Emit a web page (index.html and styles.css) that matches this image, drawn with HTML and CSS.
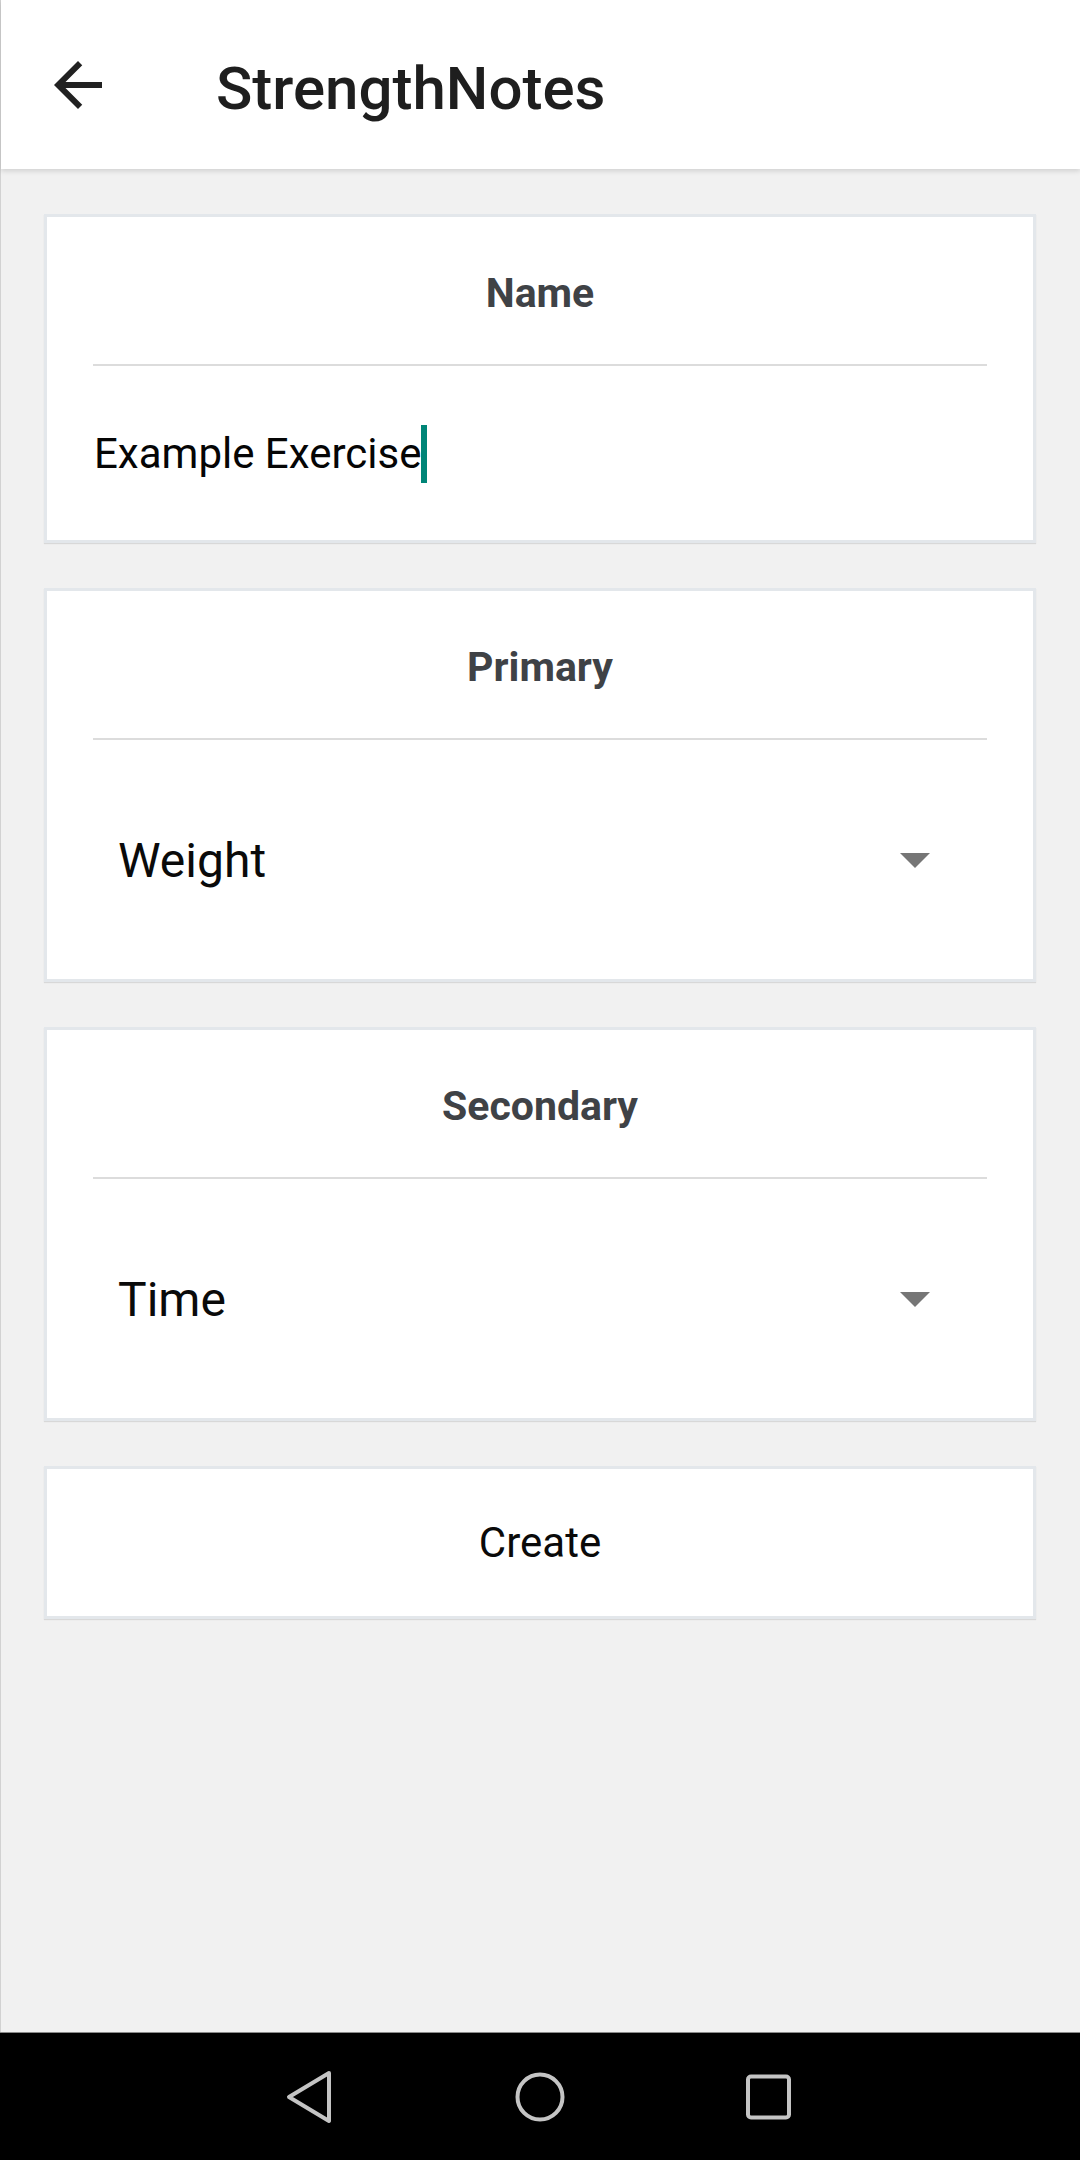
FILE: index.html
```html
<!DOCTYPE html>
<html lang="en">
<head>
<meta charset="utf-8">
<title>StrengthNotes</title>
<link rel="stylesheet" href="styles.css">
</head>
<body>
<div class="screen">
  <header class="appbar">
    <button class="nav-btn" aria-label="Back">
      <svg viewBox="0 0 24 24" width="72" height="72"><path d="M20 11H7.83l5.59-5.59L12 4l-8 8 8 8 1.41-1.41L7.83 13H20v-2z" fill="#212121"/></svg>
    </button>
    <h1 class="title">StrengthNotes</h1>
  </header>

  <main class="content">
    <section class="card">
      <div class="card-label">Name</div>
      <div class="divider"></div>
      <div class="field"><span class="field-text">Example Exercise</span><span class="cursor"></span></div>
    </section>

    <section class="card">
      <div class="card-label">Primary</div>
      <div class="divider"></div>
      <div class="spinner"><span class="spinner-text">Weight</span><span class="caret"></span></div>
    </section>

    <section class="card">
      <div class="card-label">Secondary</div>
      <div class="divider"></div>
      <div class="spinner"><span class="spinner-text">Time</span><span class="caret"></span></div>
    </section>

    <section class="card card-button">
      <span class="button-text">Create</span>
    </section>
  </main>

  <nav class="sysnav">
    <svg class="sys-icon" viewBox="0 0 60 60" width="60" height="60"><path d="M48 6 L 8 30 L 48 54 Z" fill="none" stroke="#c4c4c4" stroke-width="4" stroke-linejoin="round"/></svg>
    <svg class="sys-icon" viewBox="0 0 60 60" width="60" height="60"><circle cx="30" cy="30" r="22.5" fill="none" stroke="#c4c4c4" stroke-width="4"/></svg>
    <svg class="sys-icon" viewBox="0 0 60 60" width="60" height="60"><rect x="9" y="9.5" width="41" height="41" rx="3" fill="none" stroke="#c4c4c4" stroke-width="4"/></svg>
  </nav>
</div>
</body>
</html>
```

FILE: styles.css
```css
* { box-sizing: border-box; }

html, body {
  margin: 0;
  padding: 0;
}

body {
  width: 1080px;
  height: 2160px;
  font-family: Roboto, "Noto Sans", "Liberation Sans", sans-serif;
  background: #f1f1f1;
  overflow: hidden;
}

.screen {
  width: 1080px;
  height: 2160px;
  display: flex;
  flex-direction: column;
  border-left: 1px solid #d2d2d2;
}

.appbar {
  height: 169px;
  flex: 0 0 169px;
  background: #ffffff;
  display: flex;
  align-items: center;
  padding-left: 41px;
  box-shadow: 0 2px 5px rgba(0, 0, 0, 0.14);
  position: relative;
  z-index: 1;
}

.nav-btn {
  width: 72px;
  height: 72px;
  padding: 0;
  border: 0;
  background: transparent;
  display: flex;
}

.title {
  margin: 0 0 0 102px;
  padding-top: 8px;
  font-size: 60px;
  line-height: 72px;
  font-weight: 500;
  color: #1e1e1e;
}

.content {
  flex: 1;
  padding: 45px 44px 0 43px;
  display: flex;
  flex-direction: column;
  gap: 45px;
}

.card {
  background: #ffffff;
  border: 3px solid #e3e7eb;
  box-shadow: 0 1px 1px rgba(0, 0, 0, 0.10);
  padding: 52px 0 0 0;
}

.card-label {
  font-size: 41px;
  line-height: 48px;
  font-weight: 700;
  color: #3f4246;
  text-align: center;
}

.divider {
  height: 2px;
  margin: 47px 46px 0 46px;
  background: #dcdcdc;
}

.field {
  margin: 58.6px 0 57.4px 47px;
  height: 58px;
  display: flex;
  align-items: center;
}

.field-text {
  font-size: 42px;
  line-height: 58px;
  color: #050505;
}

.cursor {
  width: 6px;
  height: 58px;
  background: #008577;
}

.spinner {
  display: flex;
  align-items: center;
  justify-content: space-between;
  padding: 92.6px 103px 90.4px 71px;
}

.spinner-text {
  font-size: 48px;
  line-height: 56px;
  color: #0a0a0a;
}

.caret {
  width: 0;
  height: 0;
  border-left: 15px solid transparent;
  border-right: 15px solid transparent;
  border-top: 15px solid #767676;
}

.card-button {
  padding: 0;
  height: 153px;
  display: flex;
  align-items: center;
  justify-content: center;
}

.button-text {
  font-size: 42px;
  line-height: 48px;
  color: #0a0a0a;
  padding-top: 2px;
}

.sysnav {
  flex: 0 0 128px;
  height: 128px;
  background: #000000;
  border-top: 1px solid #8a8a8a;
  display: flex;
  align-items: center;
  justify-content: center;
  gap: 169px;
  margin-left: -1px;
}

.sys-icon {
  display: block;
}
```
